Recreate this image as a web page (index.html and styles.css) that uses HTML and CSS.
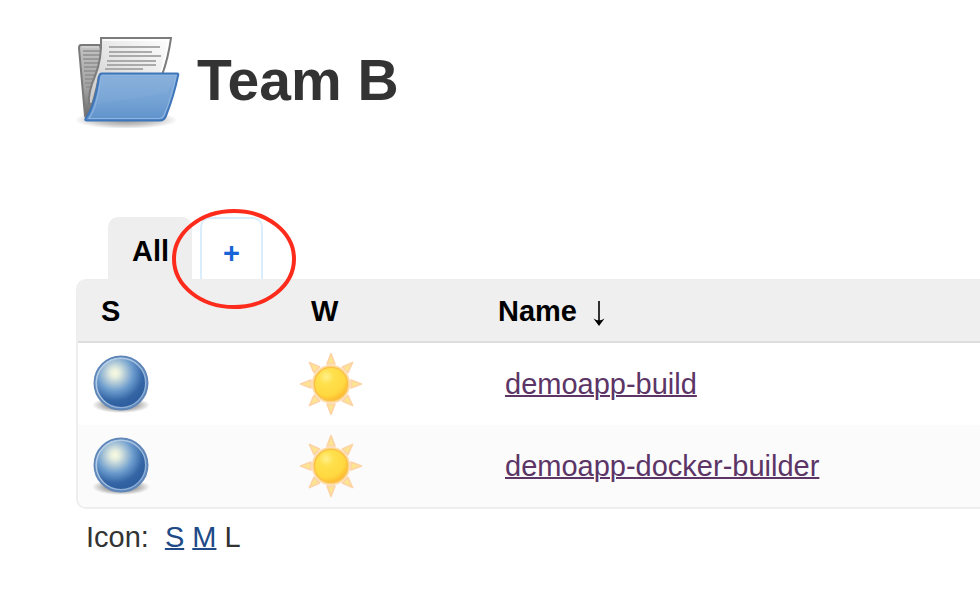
FILE: index.html
```html
<!DOCTYPE html>
<html lang="en">
<head>
<meta charset="utf-8">
<title>Team B</title>
<link rel="stylesheet" href="styles.css">
</head>
<body>
<svg class="defs" aria-hidden="true">
  <defs>
    <radialGradient id="ballFill" cx="26" cy="21" r="33" gradientUnits="userSpaceOnUse">
      <stop offset="0" stop-color="#fafbe0"/>
      <stop offset=".15" stop-color="#e2ebdf"/>
      <stop offset=".55" stop-color="#6b9bcd"/>
      <stop offset=".85" stop-color="#3465a4"/>
      <stop offset="1" stop-color="#2f5f9f"/>
    </radialGradient>
    <linearGradient id="ballRim" x1="0" y1="0" x2="1" y2="1">
      <stop offset="0" stop-color="#c3d7ec"/>
      <stop offset="1" stop-color="#7fa5d3"/>
    </linearGradient>
    <radialGradient id="shade">
      <stop offset="0" stop-color="#000" stop-opacity=".6"/>
      <stop offset=".6" stop-color="#000" stop-opacity=".3"/>
      <stop offset="1" stop-color="#000" stop-opacity="0"/>
    </radialGradient>
    <radialGradient id="sunFill" cx=".36" cy=".28" r=".75">
      <stop offset="0" stop-color="#fff08a"/>
      <stop offset=".3" stop-color="#ffe04d"/>
      <stop offset=".75" stop-color="#ffd83f"/>
      <stop offset="1" stop-color="#fdb92e"/>
    </radialGradient>
    <symbol id="ball" viewBox="0 0 64 64">
      <ellipse cx="32" cy="53" rx="29" ry="8" fill="url(#shade)"/>
      <circle cx="32" cy="31" r="26.5" fill="url(#ballFill)" stroke="#5f86b8" stroke-width="2"/>
      <circle cx="32" cy="31" r="24.8" fill="none" stroke="url(#ballRim)" stroke-width="1.6"/>
    </symbol>
    <symbol id="sun" viewBox="0 0 64 64">
      <g fill="#fde590" stroke="#fdd3a6" stroke-width="1.6" stroke-linejoin="round">
        <path id="ray" d="M32 1.5L36 12H28Z"/>
        <use href="#ray" transform="rotate(45 32 32)"/>
        <use href="#ray" transform="rotate(90 32 32)"/>
        <use href="#ray" transform="rotate(135 32 32)"/>
        <use href="#ray" transform="rotate(180 32 32)"/>
        <use href="#ray" transform="rotate(225 32 32)"/>
        <use href="#ray" transform="rotate(270 32 32)"/>
        <use href="#ray" transform="rotate(315 32 32)"/>
      </g>
      <circle cx="32" cy="32" r="18.6" fill="#fdd978" stroke="#fddcb4" stroke-width="1.4"/>
      <circle cx="32" cy="32" r="16.6" fill="url(#sunFill)" stroke="#fbc04a" stroke-width="1.4"/>
    </symbol>
  </defs>
</svg>

<main class="page">
  <header class="heading">
    <svg class="folder" viewBox="0 0 105 96" aria-hidden="true">
      <defs>
        <linearGradient id="folderFront" x1="0" y1="0" x2="0" y2="1">
          <stop offset="0" stop-color="#85aedb"/>
          <stop offset=".55" stop-color="#75a3d5"/>
          <stop offset="1" stop-color="#5f92cb"/>
        </linearGradient>
        <linearGradient id="folderBack" x1="0" y1="0" x2="0" y2="1">
          <stop offset="0" stop-color="#c4c4c4"/>
          <stop offset=".6" stop-color="#a0a0a0"/>
          <stop offset="1" stop-color="#666"/>
        </linearGradient>
        <linearGradient id="paper" x1="1" y1="0" x2="0" y2="1">
          <stop offset="0" stop-color="#fff"/>
          <stop offset=".5" stop-color="#e6e6e6"/>
          <stop offset="1" stop-color="#c8c8c8"/>
        </linearGradient>
      </defs>
      <ellipse cx="50" cy="88" rx="52" ry="9" fill="url(#shade)" opacity=".7"/>
      <path d="M5 13H24L40 87H12Q10 87 9 84L3 16Q3 13 5 13Z" fill="url(#folderBack)" stroke="#7a7a7a" stroke-width="2"/>
      <path d="M5.500 15H23" fill="none" stroke="#dadada" stroke-width="1"/>
      <path d="M7 19H24M7 23H25M7 27H24M8 31H24M8 35H23M8 39H22M9 43H21M9 47H20M9 51H19M10 55H17" stroke="#8f8f8f" stroke-width="1.500"/>
      <path d="M25 6H95Q92 27 86 43L78 72H13Q12 60 19 44Q26 27 25 6Z" fill="url(#paper)" stroke="#7c7c7c" stroke-width="2"/>
      <path d="M27 8H92.500Q90 25 85 40" fill="none" stroke="#fff" stroke-width="1.500"/>
      <path d="M33 15H84M33 20H76M33 24H85M31 29H80M31 33H80M29 37H67" stroke="#aaa" stroke-width="2"/>
      <path d="M23 44Q19 66 12 85" fill="none" stroke="#777" stroke-width="2"/>
      <path d="M26 41.500H101Q103 41.500 102 44Q98 63 90 84Q88 88.500 84 88.500H11Q8 88.500 10 86Q19 74 23 45Q23.500 41.500 26 41.500Z" fill="url(#folderFront)" stroke="#3f76ba" stroke-width="2"/>
      <path d="M26 43.500H100Q96 65 88 83Q86.500 86.500 83 86.500H13Q21 75 25 46Z" fill="none" stroke="#8fb5e0" stroke-width="1.200"/>
      <path d="M26 45H98Q95 56 91 61Q57 66 21 72Q24 60 26 45Z" fill="#fff" opacity=".04"/>
    </svg>
    <h1>Team B</h1>
  </header>

  <nav class="tabs" aria-label="Views">
    <a class="tab active" href="#all">All</a>
    <div class="marked">
      <a class="tab new" href="#new" aria-label="New view">+</a>
      <svg class="ring" viewBox="0 0 126 102" aria-hidden="true"><ellipse cx="63" cy="51" rx="60" ry="48" fill="none" stroke="#fc2b1c" stroke-width="4"/></svg>
    </div>
  </nav>

  <table class="jobs">
    <thead>
      <tr>
        <th class="status" scope="col">S</th>
        <th class="weather" scope="col">W</th>
        <th scope="col"><span class="sortable">Name <svg class="sort" viewBox="0 0 14 28" role="img" aria-label="Sorted"><path d="M7 2V25" fill="none" stroke="#000" stroke-width="1.6"/><path d="M1.500 19.500Q4.500 21.500 7 21.500T12.500 19.500L7 27Z"/></svg></span></th>
      </tr>
    </thead>
    <tbody>
      <tr>
        <td><svg class="icon" role="img" aria-label="Success"><use href="#ball"/></svg></td>
        <td><svg class="icon" role="img" aria-label="Stable"><use href="#sun"/></svg></td>
        <td class="name"><a href="#demoapp-build">demoapp-build</a></td>
      </tr>
      <tr>
        <td><svg class="icon" role="img" aria-label="Success"><use href="#ball"/></svg></td>
        <td><svg class="icon" role="img" aria-label="Stable"><use href="#sun"/></svg></td>
        <td class="name"><a href="#demoapp-docker-builder">demoapp-docker-builder</a></td>
      </tr>
    </tbody>
  </table>

  <footer class="sizes"><span class="label">Icon:</span><a href="#s">S</a> <a href="#m">M</a> L</footer>
</main>
</body>
</html>
```
FILE: styles.css
```css
body {
  margin: 0;
  background: #fff;
  color: #333;
  font: 29px/32px "Liberation Sans", Arial, Helvetica, sans-serif;
}

.defs {
  position: absolute;
  width: 0;
  height: 0;
}

.page {
  padding: 32px 0 32px 76px;
}

.heading {
  display: flex;
  align-items: center;
  gap: 16px;
}

.folder {
  width: 105px;
  height: 96px;
}

h1 {
  margin: 0;
  font-size: 57px;
  line-height: 66px;
}

.tabs {
  display: flex;
  gap: 8px;
  margin: 89px 0 0 32px;
}

.tab {
  display: block;
  box-sizing: border-box;
  height: 62px;
  padding: 16px 22px 0;
  border: 2px solid #eee;
  border-bottom: 0;
  border-radius: 10px 10px 0 0;
  color: #000;
  font-weight: bold;
  text-decoration: none;
}

.active {
  padding-right: 21px;
  background: #eee;
}

.new {
  padding: 18px 21px 0;
  border-color: #d9edfc;
  color: #1563d6;
}

.marked {
  position: relative;
}

.ring {
  position: absolute;
  top: -9px;
  left: -29px;
  width: 126px;
  height: 102px;
  pointer-events: none;
}

.jobs {
  width: 100%;
  border: 2px solid #eee;
  border-right: 0;
  border-radius: 10px 0 0 10px;
  border-spacing: 0;
}

th {
  padding: 14px 23px;
  background: #efefef;
  border-bottom: 2px solid #ddd;
  color: #000;
  text-align: left;
}

th:first-child {
  border-top-left-radius: 8px;
}

.status {
  width: 164px;
}

.weather {
  width: 141px;
}

.sortable {
  display: flex;
  align-items: center;
  gap: 15px;
}

.sort {
  width: 14px;
  height: 28px;
  margin-top: 4px;
}

td {
  padding: 9px 11px;
}

tbody tr:nth-child(even) td {
  background: #fbfbfb;
}

tbody tr:last-child td:first-child {
  border-bottom-left-radius: 8px;
}

.icon {
  display: block;
  width: 64px;
  height: 64px;
}

.name {
  padding-left: 30px;
}

.name a {
  color: #5c3566;
}

a {
  color: #204a87;
  text-decoration-thickness: 2px;
}

.sizes {
  margin: 12px 0 0 10px;
}

.label {
  margin-right: 16px;
}
```
